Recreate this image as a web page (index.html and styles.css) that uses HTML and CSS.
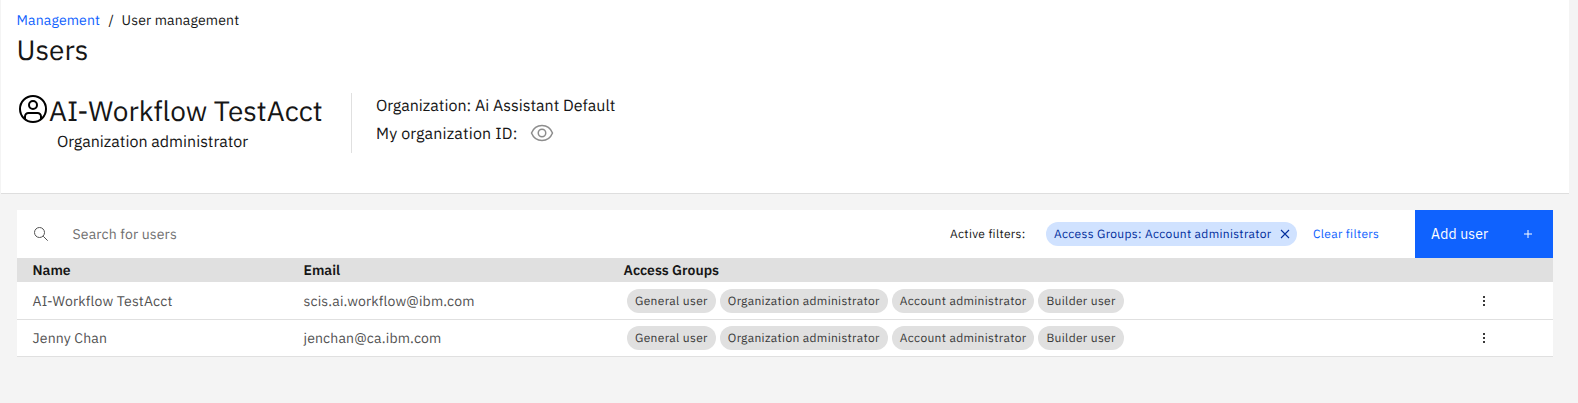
FILE: index.html
```html
<!DOCTYPE html>
<html lang="en">
<head>
<meta charset="utf-8">
<title>Users</title>
<link rel="stylesheet" href="styles.css">
</head>
<body>
<header class="page-header">
  <nav class="breadcrumb"><a class="crumb-link" href="#">Management</a><span class="crumb-sep">/</span><span class="crumb-current">User management</span></nav>
  <h1 class="title">Users</h1>
  <section class="account">
    <div class="identity">
      <div class="identity-row">
        <svg class="avatar" viewBox="0 0 32 32" fill="none" stroke="#000" stroke-width="2"><circle cx="16" cy="16" r="13"/><circle cx="16" cy="12" r="4"/><path d="M8 26v-2.500a3.500 3.500 0 0 1 3.500-3.500h9a3.500 3.500 0 0 1 3.500 3.500V26"/></svg>
        <span class="account-name">AI-Workflow TestAcct</span>
      </div>
      <div class="role">Organization administrator</div>
    </div>
    <div class="organization">
      <div class="org-line"><span class="org-text">Organization: Ai Assistant Default</span></div>
      <div class="org-line"><span class="org-text org-id">My organization ID:</span>
        <svg class="eye" viewBox="0 0 32 32" fill="none" stroke="#8d8d8d" stroke-width="2"><path d="M2 16C4.500 9.800 9.800 6 16 6s11.500 3.800 14 10c-2.500 6.200-7.800 10-14 10S4.500 22.200 2 16z"/><circle cx="16" cy="16" r="5"/></svg>
      </div>
    </div>
  </section>
</header>
<main class="users">
  <div class="toolbar">
    <svg class="search-icon" viewBox="0 0 16 16" fill="none" stroke="#525252"><circle cx="6.500" cy="6.500" r="5"/><path d="M10.200 10.200l4.500 4.500"/></svg>
    <span class="search-text">Search for users</span>
    <span class="filters-label">Active filters:</span>
    <span class="tag tag-filter"><span class="tag-text">Access Groups: Account administrator</span><svg class="close" viewBox="0 0 16 16" fill="none" stroke="#002d9c" stroke-width="1.100"><path d="M4 4l8 8M12 4l-8 8"/></svg></span>
    <a class="clear" href="#">Clear filters</a>
    <button class="add"><span>Add user</span><svg class="plus" viewBox="0 0 16 16" fill="none" stroke="#fff"><path d="M8 4v8M4 8h8"/></svg></button>
  </div>
  <div class="row head"><span>Name</span><span>Email</span><span>Access Groups</span></div>
  <div class="row user">
    <span>AI-Workflow TestAcct</span><span>scis.ai.workflow@ibm.com</span>
    <div class="tags"><span class="tag"><span class="tag-text">General user</span></span><span class="tag"><span class="tag-text">Organization administrator</span></span><span class="tag"><span class="tag-text">Account administrator</span></span><span class="tag"><span class="tag-text">Builder user</span></span></div>
    <svg class="menu" viewBox="0 0 16 16" fill="#393939"><path d="M7 3h2v2H7zM7 7h2v2H7zM7 11h2v2H7z"/></svg>
  </div>
  <div class="row user last">
    <span>Jenny Chan</span><span>jenchan@ca.ibm.com</span>
    <div class="tags"><span class="tag"><span class="tag-text">General user</span></span><span class="tag"><span class="tag-text">Organization administrator</span></span><span class="tag"><span class="tag-text">Account administrator</span></span><span class="tag"><span class="tag-text">Builder user</span></span></div>
    <svg class="menu" viewBox="0 0 16 16" fill="#393939"><path d="M7 3h2v2H7zM7 7h2v2H7zM7 11h2v2H7z"/></svg>
  </div>
</main>
</body>
</html>
```
FILE: styles.css
```css
* { box-sizing: border-box; }
body { margin: 0; background: #f4f4f4; color: #161616; font: 14px/18px "IBM Plex Sans", Roboto, sans-serif; letter-spacing: .16px; text-rendering: geometricPrecision; }
svg { display: block; flex: none; }
a { text-decoration: none; color: #0f62fe; }
.page-header { height: 194px; margin: 0 9px 0 1px; padding: 11px 16px 0 15.500px; background: #fff; border-bottom: 1px solid #dedede; }
.breadcrumb { display: flex; }
.crumb-link { width: 92px; }
.crumb-sep { width: 13px; }
.title { margin: 3px 0 25px; font-size: 28px; line-height: 36px; font-weight: 400; letter-spacing: 0; }
.account { display: flex; height: 60px; padding-left: .500px; letter-spacing: 0; }
.identity { width: 335px; border-right: 1px solid #e0e0e0; }
.identity-row { display: flex; }
.avatar { width: 32px; height: 32px; }
.account-name { font-size: 28px; line-height: 36px; white-space: nowrap; }
.role { font-size: 16px; line-height: 24px; padding: 1px 0 0 40px; }
.organization { display: flex; flex-direction: column; gap: 4px; padding-left: 24px; }
.org-line { display: flex; height: 24px; font-size: 16px; line-height: 24px; }
.org-text { padding-top: 1px; }
.org-id { width: 154px; letter-spacing: .16px; }
.eye { width: 24px; height: 24px; }
.users { width: 1536px; margin: 16px 0 0 17px; background: #fff; }
.toolbar { display: flex; align-items: center; height: 48px; padding-left: 16px; }
.search-icon { width: 16px; height: 16px; }
.search-text { width: 901px; padding-left: 23.500px; color: #6f6f6f; }
.filters-label { width: 96px; padding-top: 2px; font-size: 12px; letter-spacing: .32px; }
.tag { display: flex; align-items: center; flex: none; height: 24px; padding: 0 8px; border-radius: 12px; background: #e0e0e0; color: #393939; font-size: 12px; letter-spacing: .33px; white-space: nowrap; }
.tag-text { padding-top: 2px; }
.tag-filter { width: 251px; background: #d0e2ff; color: #002d9c; padding-right: 4px; justify-content: space-between; }
.close { width: 16px; height: 16px; }
.clear { margin-left: 16px; padding-top: 2px; font-size: 12px; letter-spacing: .32px; }
.add { display: flex; align-items: center; justify-content: space-between; width: 138px; height: 48px; margin-left: auto; padding: 0 17px 0 16px; border: 0; background: #0f62fe; color: #fff; font: inherit; letter-spacing: .16px; }
.plus { width: 16px; height: 16px; }
.row { display: grid; grid-template-columns: 271px 320px 852px 16px; padding-left: 15.500px; align-items: center; }
.head { height: 24px; background: #e0e0e0; font-weight: 600; letter-spacing: 0; }
.user { height: 38px; border-bottom: 1px solid #e0e0e0; color: #525252; }
.last { height: 37px; }
.tags { display: flex; gap: 4px; padding-left: 3.500px; }
.menu { width: 16px; height: 16px; }
```
